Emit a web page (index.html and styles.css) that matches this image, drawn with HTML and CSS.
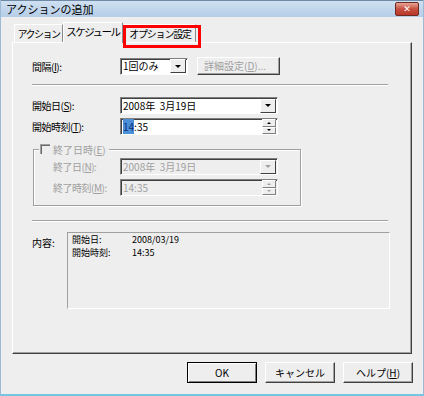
FILE: index.html
```html
<!DOCTYPE html>
<html lang="ja">
<head>
  <meta charset="UTF-8" />
  <title>アクションの追加</title>
  <link rel="stylesheet" href="styles.css">
</head>
<body>
  <div class="ventana">
    <div class="titulo">
      <span>アクションの追加</span>
      <span class="cerrar">&#x2715;</span>
    </div>

    <div class="cliente">
      <div class="pestanas">
        <div class="pestana p1">アクション</div>
        <div class="pestana p2 activa">スケジュール</div>
        <div class="pestana p3">オプション設定</div>
      </div>

      <div class="panel">
        <!-- intervalo -->
        <div class="fila">
          <label>間隔(<u>I</u>):</label>
          <div class="controles">
            <div class="combo corto">
              <span class="valor">1回のみ</span>
              <span class="flecha"><i></i></span>
            </div>
            <div class="boton deshabilitado">詳細設定(<u>D</u>)...</div>
          </div>
        </div>

        <div class="separador"></div>

        <div class="fila primera">
          <label>開始日(<u>S</u>):</label>
          <div class="combo">
            <span class="valor">2008年&nbsp; 3月19日</span>
            <span class="flecha"><i></i></span>
          </div>
        </div>

        <div class="fila">
          <label>開始時刻(<u>T</u>):</label>
          <div class="combo">
            <span class="valor"><span class="sel">14</span>:35</span>
            <span class="giro"><b><i></i></b><b><i class="abajo"></i></b></span>
          </div>
        </div>

        <!-- fin -->
        <div class="grupo">
          <div class="grupo-titulo">
            <span class="casilla"></span>
            <span>終了日時(<u>E</u>)</span>
          </div>
          <div class="fila gris">
            <label>終了日(<u>N</u>):</label>
            <div class="combo apagado">
              <span class="valor">2008年&nbsp; 3月19日</span>
              <span class="flecha"><i></i></span>
            </div>
          </div>
          <div class="fila gris">
            <label>終了時刻(<u>M</u>):</label>
            <div class="combo apagado">
              <span class="valor">14:35</span>
              <span class="giro"><b><i></i></b><b><i class="abajo"></i></b></span>
            </div>
          </div>
        </div>

        <div class="separador segundo"></div>

        <div class="contenido">
          <label>内容:</label>
          <div class="caja">
            <div class="linea"><span>開始日:</span><span>2008/03/19</span></div>
            <div class="linea"><span>開始時刻:</span><span>14:35</span></div>
          </div>
        </div>
      </div>

      <div class="botones">
        <div class="boton grande defecto">OK</div>
        <div class="boton grande">キャンセル</div>
        <div class="boton grande">ヘルプ(<u>H</u>)</div>
      </div>
    </div>

    <div class="marca"></div>
  </div>
</body>
</html>
```

FILE: styles.css
```css
body {
  margin: 0;
  background: #fff;
  font-family: "Noto Sans CJK JP", "DejaVu Sans", sans-serif;
  font-size: 10px;
  color: #000;
}

u {
  text-decoration: underline;
}

.ventana {
  position: relative;
  width: 424px;
  height: 396px;
  box-sizing: border-box;
  background: #eeeeee;
  border-left: 1px solid #9cbad6;
  border-right: 1px solid #9cbad6;
  border-bottom: 2px solid #74c6e4;
  overflow: hidden;
}

.titulo {
  display: flex;
  align-items: center;
  height: 17px;
  padding-left: 5px;
  background: linear-gradient(#cfe0f1, #b5cde7);
  border-top: 1px solid #6f8aa6;
  box-sizing: border-box;
  font-size: 11px;
  line-height: 16px;
}

.cerrar {
  margin-left: auto;
  margin-right: 4px;
  width: 22px;
  height: 12px;
  border: 1px solid #6e2a22;
  border-radius: 2px;
  background: linear-gradient(#e8a496, #c6503f 50%, #b8382a);
  color: #fff;
  font-size: 9px;
  font-weight: bold;
  line-height: 12px;
  text-align: center;
}

.cliente {
  padding: 5px 0 0 11px;
}

.pestanas {
  display: flex;
  align-items: flex-end;
  height: 20px;
  padding-left: 2px;
}

.pestana {
  height: 18px;
  padding: 0;
  box-sizing: border-box;
  line-height: 17px;
  text-align: center;
  white-space: nowrap;
  border-top: 1px solid #fff;
  border-left: 1px solid #fff;
  border-right: 1px solid #8a8a8a;
  letter-spacing: -1.5px;
}

.p1 {
  width: 49px;
}

.p2 {
  width: 60px;
}

.p3 {
  width: 72px;
  margin-left: 1px;
  letter-spacing: -1.2px;
}

.pestana.activa {
  height: 21px;
  margin-bottom: -1px;
  background: #eeeeee;
  position: relative;
  z-index: 1;
  font-size: 10.5px;
  line-height: 18px;
}

.panel {
  width: 400px;
  height: 312px;
  box-sizing: border-box;
  padding: 14px 0 0 19px;
  border-top: 1px solid #fff;
  border-left: 1px solid #fff;
  border-right: 1px solid #404040;
  border-bottom: 1px solid #404040;
  box-shadow: inset -1px -1px 0 #a0a0a0;
}

.fila {
  display: grid;
  grid-template-columns: 88px auto;
  align-items: center;
  margin-top: 4px;
}

.fila:first-child {
  margin-top: 0;
}

.fila.primera {
  margin-top: 11px;
}

.fila label {
  letter-spacing: -0.5px;
}

.controles {
  display: flex;
  align-items: center;
  gap: 9px;
}

.combo {
  display: flex;
  align-items: center;
  width: 158px;
  height: 17px;
  box-sizing: border-box;
  background: #fff;
  border-top: 1px solid #808080;
  border-left: 1px solid #808080;
  border-right: 1px solid #fff;
  border-bottom: 1px solid #fff;
  box-shadow: inset 1px 1px 0 #404040;
}

.combo.corto {
  width: 68px;
}

.valor {
  flex: 1;
  padding-left: 2px;
  line-height: 14px;
  white-space: nowrap;
}

.sel {
  background: #4a8fd8;
  color: #0d2f78;
}

.flecha {
  display: flex;
  align-items: center;
  justify-content: center;
  width: 16px;
  height: 14px;
  margin: 0 1px 0 0;
  background: #eeeeee;
  box-sizing: border-box;
  border-top: 1px solid #fff;
  border-left: 1px solid #fff;
  border-right: 1px solid #404040;
  border-bottom: 1px solid #404040;
}

.flecha i {
  width: 0;
  height: 0;
  border-left: 3px solid transparent;
  border-right: 3px solid transparent;
  border-top: 3px solid #000;
}

.giro {
  display: flex;
  flex-direction: column;
  width: 14px;
  height: 15px;
  margin-right: 1px;
}

.giro b {
  flex: 1;
  display: flex;
  align-items: center;
  justify-content: center;
  background: #eeeeee;
  box-sizing: border-box;
  border-top: 1px solid #fff;
  border-left: 1px solid #fff;
  border-right: 1px solid #808080;
  border-bottom: 1px solid #808080;
}

.giro i {
  width: 0;
  height: 0;
  border-left: 2px solid transparent;
  border-right: 2px solid transparent;
  border-bottom: 2px solid #000;
}

.giro i.abajo {
  border-bottom: none;
  border-top: 2px solid #000;
}

.boton {
  height: 18px;
  box-sizing: border-box;
  padding: 0 6px;
  line-height: 16px;
  text-align: center;
  background: #eeeeee;
  border-top: 1px solid #fff;
  border-left: 1px solid #fff;
  border-right: 1px solid #404040;
  border-bottom: 1px solid #404040;
  box-shadow: inset -1px -1px 0 #a0a0a0;
}

.boton.deshabilitado {
  width: 83px;
  color: #a0a0a0;
  text-align: left;
}

.separador {
  width: 356px;
  margin-top: 9px;
  border-top: 1px solid #a0a0a0;
  border-bottom: 1px solid #fff;
}

.separador.segundo {
  margin-top: 14px;
}

.grupo {
  width: 268px;
  height: 57px;
  margin: 14px 0 0 1px;
  box-sizing: border-box;
  border: 1px solid #a0a0a0;
  box-shadow: inset 1px 1px 0 #fff, 1px 1px 0 #fff;
}

.grupo-titulo {
  display: flex;
  align-items: center;
  gap: 3px;
  width: fit-content;
  height: 12px;
  margin: -7px 0 0 5px;
  padding: 0 3px 0 1px;
  background: #eeeeee;
  color: #a0a0a0;
}

.casilla {
  width: 10px;
  height: 10px;
  box-sizing: border-box;
  border-top: 1px solid #a0a0a0;
  border-left: 1px solid #a0a0a0;
  box-shadow: inset 1px 1px 0 #6a6a6a;
}

.grupo .fila {
  grid-template-columns: 67px auto;
  padding-left: 19px;
  margin-top: 4px;
}

.grupo .grupo-titulo + .fila {
  margin-top: 3px;
}

.fila.gris {
  color: #a0a0a0;
}

.combo.apagado {
  background: #eeeeee;
  color: #a0a0a0;
}

.combo.apagado .flecha i {
  border-top-color: #a0a0a0;
}

.combo.apagado .giro i {
  border-bottom-color: #a0a0a0;
  border-top-color: #a0a0a0;
}

.contenido {
  display: grid;
  grid-template-columns: 35px auto;
  align-items: start;
  margin-top: 10px;
}

.contenido label {
  padding-top: 3px;
}

.caja {
  width: 323px;
  height: 77px;
  box-sizing: border-box;
  padding: 0 0 0 4px;
  border-top: 1px solid #a0a0a0;
  border-left: 1px solid #a0a0a0;
  border-right: 1px solid #fff;
  border-bottom: 1px solid #fff;
  font-size: 9px;
  line-height: 13px;
}

.linea {
  display: grid;
  grid-template-columns: 60px auto;
}

.botones {
  display: flex;
  justify-content: flex-end;
  gap: 8px;
  width: 401px;
  margin-top: 8px;
}

.boton.grande {
  width: 70px;
  height: 21px;
  line-height: 19px;
}

.boton.defecto {
  border: 1px solid #000;
  box-shadow: inset 1px 1px 0 #fff, inset -1px -1px 0 #808080;
}

.marca {
  position: absolute;
  left: 122px;
  top: 25px;
  width: 78px;
  height: 23px;
  box-sizing: border-box;
  border: 3px solid #ff0000;
  z-index: 2;
}
```
